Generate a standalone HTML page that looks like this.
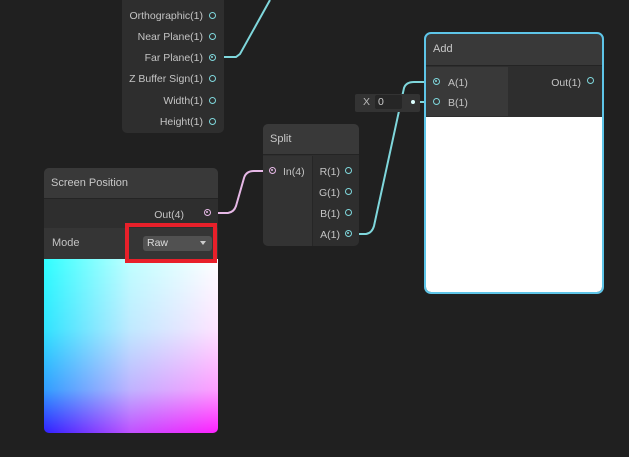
<!DOCTYPE html>
<html><head><style>
*{margin:0;padding:0;box-sizing:border-box}
body{width:629px;height:457px;background:#202020;position:relative;overflow:hidden;font-family:"Liberation Sans",sans-serif;font-size:10.5px;color:#c4c4c4}
.abs{position:absolute}
.node{position:absolute;background:#2e2e2e;border-radius:5px;overflow:hidden}
.hdr{position:absolute;left:0;right:0;top:0;background:#393939;color:#c8c8c8;font-size:11px;padding-left:7px;border-bottom:1px solid #242424}
.lbl{position:absolute;white-space:nowrap}
.port{position:absolute;width:7px;height:7px;border:1.5px solid #7fd7dc;border-radius:50%}
.pp{border-color:#e6b8e6}
.port.f::after{content:"";position:absolute;left:1px;top:1px;width:2px;height:2px;background:#7fd7dc;border-radius:50%}
.pp.f::after{background:#e6b8e6}
</style></head><body>
<svg class="abs" style="left:0;top:0" width="629" height="457">
<path d="M216 57 L236 57 L240 54 L270 0" stroke="#7fd7dc" stroke-width="2" fill="none"/>
<path d="M210 213 L228 213 Q234 212 236 206 L244 178 Q246 171 254 171 L270 171" stroke="#e6b8e6" stroke-width="2" fill="none"/>
<path d="M352 234 L366 234 Q372 233 374 226 L404 88 Q406 82 414 82 L435 82" stroke="#7fd7dc" stroke-width="2" fill="none"/>
<path d="M413 102 L435 102" stroke="#7fd7dc" stroke-width="2" fill="none"/>
</svg>

<div class="node" style="left:122px;top:-10px;width:102px;height:143px">
<div class="lbl" style="right:21px;top:20px">Orthographic(1)</div>
<div class="lbl" style="right:21px;top:41px">Near Plane(1)</div>
<div class="lbl" style="right:21px;top:62px">Far Plane(1)</div>
<div class="lbl" style="right:21px;top:83px">Z Buffer Sign(1)</div>
<div class="lbl" style="right:21px;top:105px">Width(1)</div>
<div class="lbl" style="right:21px;top:126px">Height(1)</div>
<div class="port" style="left:87px;top:22px"></div>
<div class="port" style="left:87px;top:43px"></div>
<div class="port f" style="left:87px;top:64px"></div>
<div class="port" style="left:87px;top:85px"></div>
<div class="port" style="left:87px;top:107px"></div>
<div class="port" style="left:87px;top:128px"></div>
</div>

<div class="node" style="left:44px;top:168px;width:174px;height:265px">
<div class="hdr" style="height:31px;line-height:30px">Screen Position</div>
<div class="lbl" style="right:34px;top:41px">Out(4)</div>
<div class="port pp f" style="left:160px;top:41px"></div>
<div class="abs" style="left:0;top:60px;width:174px;height:31px;background:#353535"></div>
<div class="lbl" style="left:8px;top:69px;font-size:11px">Mode</div>
<div class="abs" style="left:99px;top:68px;width:69px;height:15px;background:#515151;border-radius:3px;color:#ddd;padding-left:4px;line-height:15px">Raw<span style="position:absolute;right:6px;top:5px;border-left:3.5px solid transparent;border-right:3.5px solid transparent;border-top:4px solid #ccc"></span></div>
<div class="abs" style="left:0;top:91px;width:174px;height:174px;background:linear-gradient(to right,#3020ff,#c050ff 50%,#ff20ff)"><div style="width:100%;height:100%;background:linear-gradient(to bottom,#00ff00,#00e000 40%,#009000 75%,#000000);mix-blend-mode:screen"></div></div>
</div>
<div class="abs" style="left:125px;top:223px;width:92px;height:40px;border:4px solid #e8202a"></div>

<div class="node" style="left:263px;top:124px;width:96px;height:122px">
<div class="hdr" style="height:31px;line-height:30px">Split</div>
<div class="abs" style="left:0;top:32px;width:50px;height:90px;background:#333333;border-right:1px solid #262626"></div>
<div class="port pp f" style="left:6px;top:43px"></div>
<div class="lbl" style="left:20px;top:42px">In(4)</div>
<div class="lbl" style="right:19px;top:42px">R(1)</div>
<div class="lbl" style="right:19px;top:63px">G(1)</div>
<div class="lbl" style="right:19px;top:84px">B(1)</div>
<div class="lbl" style="right:19px;top:105px">A(1)</div>
<div class="port" style="left:82px;top:43px"></div>
<div class="port" style="left:82px;top:64px"></div>
<div class="port" style="left:82px;top:85px"></div>
<div class="port f" style="left:82px;top:106px"></div>
</div>

<div class="abs" style="left:355px;top:94px;width:65px;height:18px;background:#333;border-radius:2px"></div>
<div class="lbl" style="left:363px;top:96px;color:#bbb">X</div>
<div class="abs" style="left:375px;top:95px;width:27px;height:14px;background:#262626;border-radius:2px;color:#ccc;padding-left:3px;line-height:14px">0</div>
<div class="abs" style="left:411px;top:100px;width:4px;height:4px;background:#dff;border-radius:50%"></div>

<div class="node" style="left:426px;top:34px;width:176px;height:258px">
<div class="hdr" style="height:32px;line-height:31px">Add</div>
<div class="abs" style="left:0;top:33px;width:82px;height:49px;background:#393939"></div>
<div class="port f" style="left:7px;top:44px"></div>
<div class="port" style="left:7px;top:64px"></div>
<div class="lbl" style="left:22px;top:43px">A(1)</div>
<div class="lbl" style="right:21px;top:43px">Out(1)</div>
<div class="lbl" style="left:22px;top:63px">B(1)</div>
<div class="port" style="left:161px;top:43px"></div>
<div class="abs" style="left:0;top:83px;width:176px;height:175px;background:#fff"></div>
</div>
<div class="abs" style="left:424px;top:32px;width:180px;height:262px;border:2px solid #5ec5e8;border-radius:7px"></div>
</body></html>
